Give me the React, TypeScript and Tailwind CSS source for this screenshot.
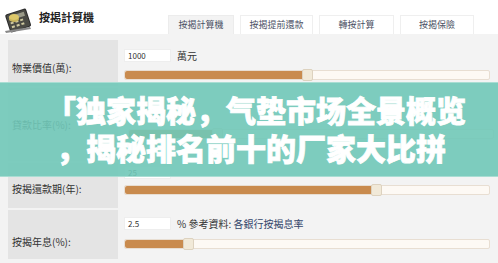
import React from "react";

const FONT = { fontFamily: '"Noto Sans CJK TC", "Noto Sans CJK SC", "Noto Sans", sans-serif' };

function Slider({ fill }: { fill: number }) {
  return (
    <div className="relative w-[366px] h-[10px] rounded-[2px] border border-[#e8ded2] bg-[#fdf9f4]">
      <div className="h-full bg-[#c98b4e] rounded-l-[2px]" style={{ width: fill }} />
      <div
        className="absolute top-[-2px] w-[11px] h-[12px] rounded-[2px] border border-[#ddd2bf] bg-[#f1e9d8]"
        style={{ left: fill - 1 }}
      />
    </div>
  );
}

function Input({ value }: { value: string }) {
  return (
    <div className="w-[47px] h-[13px] bg-white border border-[#eeeeee] text-[8px] leading-[11px] pl-[3px] text-[#333]">
      {value}
    </div>
  );
}

function Row({
  label,
  h,
  labelPt,
  children,
}: {
  label: string;
  h: number;
  labelPt: number;
  children: React.ReactNode;
}) {
  return (
    <div className="flex" style={{ height: h }}>
      <div
        className="w-[110px] bg-[#e4e4e4] text-[10px] text-[#333] pl-[4px] flex items-center"
        style={{ paddingTop: labelPt }}
      >
        {label}
      </div>
      <div className="flex-1 pl-[6px] bg-[#f3f3f3]">{children}</div>
    </div>
  );
}

function CalcIcon() {
  return (
    <svg width="32" height="30" viewBox="0 0 32 30">
      <g transform="rotate(-18 16 15)">
        <rect x="5" y="6" width="22" height="19" rx="2" fill="#2b2b2b" />
        <rect x="6" y="7" width="20" height="17" rx="1.5" fill="#4a4a44" />
        <rect x="8" y="9" width="16" height="4" fill="#9a9a88" />
        <rect x="8" y="15" width="3" height="2" fill="#cfc9a0" />
        <rect x="13" y="15" width="3" height="2" fill="#cfc9a0" />
        <rect x="18" y="15" width="3" height="2" fill="#cfc9a0" />
        <rect x="8" y="19" width="3" height="2" fill="#cfc9a0" />
        <rect x="13" y="19" width="3" height="2" fill="#cfc9a0" />
        <rect x="18" y="19" width="3" height="2" fill="#cfc9a0" />
      </g>
      <ellipse cx="12" cy="14" rx="5" ry="3" fill="#c8b45a" />
      <ellipse cx="12" cy="12" rx="5" ry="3" fill="#ddc86a" />
      <path d="M3 26 L28 22 L29 24 L4 28 Z" fill="#888" />
    </svg>
  );
}

export default function App() {
  const tabs = [
    { t: "按揭計算機", w: 66, active: true },
    { t: "按揭提前還款", w: 73 },
    { t: "轉按計算", w: 75 },
    { t: "按揭保險", w: 74 },
  ];
  return (
    <div className="relative w-[498px] h-[263px] overflow-hidden bg-[#f3f3f3]" style={FONT}>
      {/* header */}
      <div className="h-[34px] bg-white flex items-end">
        <div className="self-start pt-[5px] pl-[2px]">
          <CalcIcon />
        </div>
        <div className="self-start pt-[9px] pl-[5px] text-[11px] font-bold text-[#222] w-[134px]">
          按揭計算機
        </div>
        <div className="flex gap-[6px] items-end">
          {tabs.map((tab) => (
            <div
              key={tab.t}
              className={
                "h-[19px] flex items-center justify-center text-[9px] text-[#4a5064] border border-b-0 " +
                (tab.active ? "bg-[#f3f3f3] border-[#ececec]" : "bg-white border-[#efefef]")
              }
              style={{ width: tab.w }}
            >
              {tab.t}
            </div>
          ))}
        </div>
      </div>

      {/* form */}
      <div className="pt-[6px] pl-[8px] flex flex-col gap-[2px]">
        <Row label="物業價值(萬):" h={46} labelPt={8}>
          <div className="pt-[8px] flex items-center gap-[6px]">
            <Input value="1000" />
            <span className="text-[10px] text-[#333]">萬元</span>
          </div>
          <div className="pt-[7px]">
            <Slider fill={178} />
          </div>
        </Row>
        <Row label="貸款比率(%):" h={73} labelPt={0}>
          <div className="pt-[41px] pl-[4px]">
            <Slider fill={84} />
          </div>
        </Row>
        <Row label="按揭還款期(年):" h={45} labelPt={6}>
          <div className="pt-[3px] flex items-center gap-[6px]">
            <Input value="25" />
          </div>
          <div className="pt-[6px]">
            <Slider fill={247} />
          </div>
        </Row>
        <Row label="按揭年息(%):" h={49} labelPt={14}>
          <div className="pt-[6px] flex items-center gap-[6px]">
            <Input value="2.5" />
            <span className="text-[10px] text-[#333]">
              % 參考資料: <span className="text-[#34466b]">各銀行按揭息率</span>
            </span>
          </div>
          <div className="pt-[8px]">
            <Slider fill={59} />
          </div>
        </Row>
      </div>

      {/* overlay banner */}
      <div
        className="absolute left-0 top-[82px] w-[498px] h-[95px] bg-[rgba(112,200,184,0.9)] border-y border-[#a9ddd3] text-white font-black text-[30px] leading-[38px] [-webkit-text-stroke:0.8px_#ffffff]"
        style={{ fontFamily: '"Noto Sans CJK SC", sans-serif' }}
      >
        <div className="pt-[7px] pl-[46px] whitespace-nowrap">「独家揭秘，气垫市场全景概览</div>
        <div className="pl-[56px] whitespace-nowrap">，揭秘排名前十的厂家大比拼</div>
      </div>
    </div>
  );
}
